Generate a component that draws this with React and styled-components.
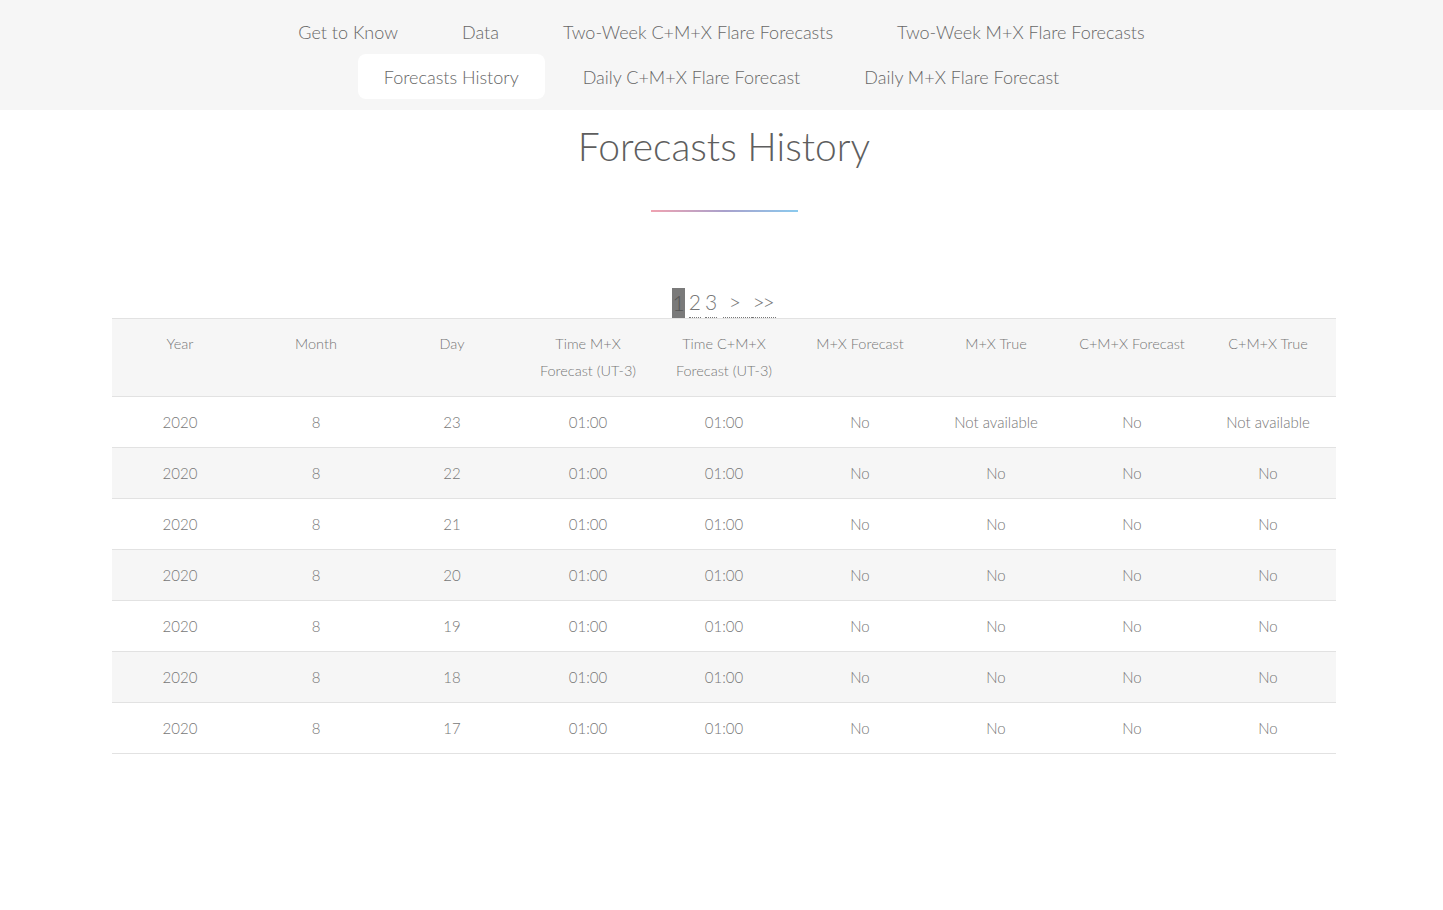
import React from 'react';
import styled, { createGlobalStyle } from 'styled-components';

const GlobalStyle = createGlobalStyle`
  body {
    margin: 0;
    background: #ffffff;
    font-family: Lato, "Open Sans", sans-serif;
    font-weight: 300;
    color: #777;
  }
`;

const NavBar = styled.nav`
  background: #f6f6f6;
  padding: 9px 0 11px;
`;

const NavList = styled.ul`
  list-style: none;
  margin: 0 auto;
  padding: 0;
  max-width: 1000px;
  display: flex;
  flex-wrap: wrap;
  justify-content: center;
`;

const NavItem = styled.li`
  margin: 0 6px;
  padding: 0 26px;
  height: 45px;
  display: flex;
  align-items: center;
  border-radius: 8px;
  font-size: 18px;
  color: #666;
  background: ${p => (p.$active ? '#ffffff' : 'transparent')};
  cursor: pointer;
`;

const Main = styled.main`
  padding: 0 107px 0 112px;
`;

const Title = styled.h1`
  margin: 10px 0 0;
  text-align: center;
  font-family: Lato, sans-serif;
  font-weight: 300;
  font-size: 39px;
  line-height: 52px;
  color: #5e5e5e;
`;

const TitleRule = styled.div`
  width: 147px;
  height: 2px;
  margin: 38px auto 0;
  background: linear-gradient(to right, #f0a3b1, #a9a1cc, #8bcaee);
`;

const Pager = styled.div`
  margin-top: 72px;
  display: flex;
  justify-content: center;
  align-items: flex-end;
  gap: 4px;
  height: 34px;
  font-size: 21px;
`;

const PageLink = styled.span`
  color: ${p => (p.$current ? '#555' : '#777')};
  background: ${p => (p.$current ? '#7a7a7a' : 'transparent')};
  border-bottom: ${p => (p.$current ? 'none' : '1px dotted #777')};
  padding: ${p => (p.$current ? '0 0 0 1px' : '0')};
  line-height: 30px;
  margin-left: ${p => p.$gap || 0}px;
  letter-spacing: ${p => p.$tight ? '-2px' : '0'};
  white-space: pre;
`;

const Table = styled.table`
  width: 100%;
  border-collapse: collapse;
  table-layout: fixed;
  font-size: 15px;
`;

const HeadCell = styled.th`
  font-weight: 300;
  font-size: 14.5px;
  background: #f6f6f6;
  border-top: 1px solid #e2e2e2;
  border-bottom: 1px solid #e2e2e2;
  padding: 11px 10px 12px;
  line-height: 27px;
  vertical-align: top;
  color: #777;
`;

const Row = styled.tr`
  background: ${p => (p.$odd ? '#f6f6f6' : '#ffffff')};
`;

const Cell = styled.td`
  text-align: center;
  padding: 12px 4px;
  line-height: 26px;
  border-bottom: 1px solid #e2e2e2;
  color: #777;
`;

const navRows = [
  'Get to Know',
  'Data',
  'Two-Week C+M+X Flare Forecasts',
  'Two-Week M+X Flare Forecasts',
  'Forecasts History',
  'Daily C+M+X Flare Forecast',
  'Daily M+X Flare Forecast',
];

const headers = [
  'Year',
  'Month',
  'Day',
  'Time M+X Forecast (UT-3)',
  'Time C+M+X Forecast (UT-3)',
  'M+X Forecast',
  'M+X True',
  'C+M+X Forecast',
  'C+M+X True',
];

const days = [23, 22, 21, 20, 19, 18, 17];

function App() {
  return (
    <>
      <GlobalStyle />
      <NavBar>
        <NavList>
          {navRows.map(item => (
            <NavItem key={item} $active={item === 'Forecasts History'}>
              {item}
            </NavItem>
          ))}
        </NavList>
      </NavBar>
      <Main>
        <Title>Forecasts History</Title>
        <TitleRule />
        <Pager>
          <PageLink $current>1</PageLink>
          <PageLink>2</PageLink>
          <PageLink>3</PageLink>
          <PageLink $gap={2}>{' >  '}</PageLink>
          <PageLink $gap={-4} $tight>{'>> '}</PageLink>
        </Pager>
        <Table>
          <thead>
            <tr>
              {headers.map(h => (
                <HeadCell key={h}>{h}</HeadCell>
              ))}
            </tr>
          </thead>
          <tbody>
            {days.map((d, i) => {
              const first = i === 0;
              return (
                <Row key={d} $odd={i % 2 === 1}>
                  <Cell>2020</Cell>
                  <Cell>8</Cell>
                  <Cell>{d}</Cell>
                  <Cell>01:00</Cell>
                  <Cell>01:00</Cell>
                  <Cell>No</Cell>
                  <Cell>{first ? 'Not available' : 'No'}</Cell>
                  <Cell>No</Cell>
                  <Cell>{first ? 'Not available' : 'No'}</Cell>
                </Row>
              );
            })}
          </tbody>
        </Table>
      </Main>
    </>
  );
}

export default App;
